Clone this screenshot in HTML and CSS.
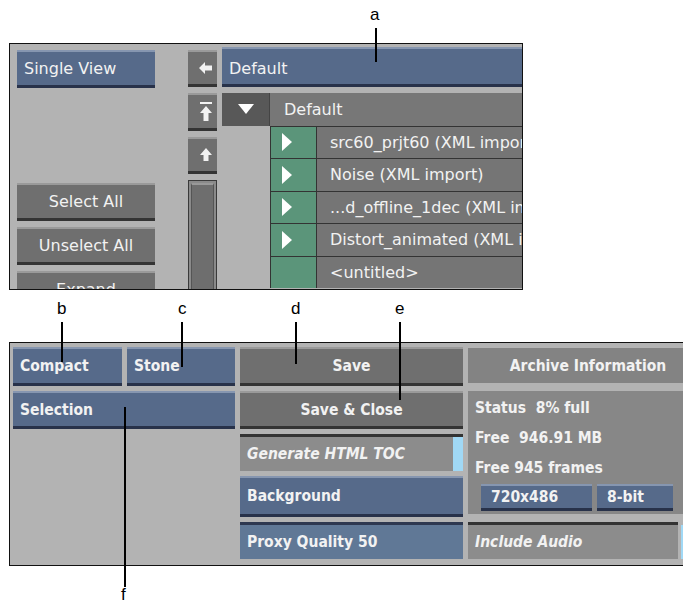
FILE: index.html
```html
<!DOCTYPE html>
<html lang="en">
<head>
  <meta charset="UTF-8">
  <title>Library Menu</title>
  <link rel="stylesheet" href="styles.css">
</head>
<body>

<div class="figure">

  <div class="panel top-panel">
    <div class="left-col">
      <div class="btn blue">Single View</div>
      <div class="btn grey center first-action">Select All</div>
      <div class="btn grey center">Unselect All</div>
      <div class="btn grey center">Expand</div>
    </div>

    <div class="scroll-col">
      <div class="btn grey icon-btn">
        <svg width="14" height="12" viewBox="0 0 14 12"><path d="M0 6 L6 0 L6 3.5 L13 3.5 L13 8.5 L6 8.5 L6 12 Z" fill="#f2f2f2"/></svg>
      </div>
      <div class="btn grey icon-btn tall">
        <svg width="12" height="20" viewBox="0 0 12 20"><rect x="0" y="0" width="12" height="2" fill="#f2f2f2"/><path d="M6 4 L12 11 L8.5 11 L8.5 19 L3.5 19 L3.5 11 L0 11 Z" fill="#f2f2f2"/></svg>
      </div>
      <div class="btn grey icon-btn">
        <svg width="12" height="14" viewBox="0 0 12 14"><path d="M6 0 L12 7 L8.5 7 L8.5 13 L3.5 13 L3.5 7 L0 7 Z" fill="#f2f2f2"/></svg>
      </div>
      <div class="track"><div class="thumb"></div></div>
    </div>

    <div class="tree-col">
      <div class="btn blue path-bar">Default</div>
      <div class="tree">
        <div class="cell head-toggle">
          <svg width="16" height="10" viewBox="0 0 16 10"><path d="M0 0 L16 0 L8 10 Z" fill="#fff"/></svg>
        </div>
        <div class="cell head-name">Default</div>

        <div class="cell blank"></div>
        <div class="cell play"><svg width="10" height="18" viewBox="0 0 10 18"><path d="M0 0 L10 9 L0 18 Z" fill="#fff"/></svg></div>
        <div class="cell name">src60_prjt60 (XML import)</div>

        <div class="cell blank"></div>
        <div class="cell play"><svg width="10" height="18" viewBox="0 0 10 18"><path d="M0 0 L10 9 L0 18 Z" fill="#fff"/></svg></div>
        <div class="cell name">Noise (XML import)</div>

        <div class="cell blank"></div>
        <div class="cell play"><svg width="10" height="18" viewBox="0 0 10 18"><path d="M0 0 L10 9 L0 18 Z" fill="#fff"/></svg></div>
        <div class="cell name">...d_offline_1dec (XML import)</div>

        <div class="cell blank"></div>
        <div class="cell play"><svg width="10" height="18" viewBox="0 0 10 18"><path d="M0 0 L10 9 L0 18 Z" fill="#fff"/></svg></div>
        <div class="cell name">Distort_animated (XML import)</div>

        <div class="cell blank"></div>
        <div class="cell play"></div>
        <div class="cell name">&lt;untitled&gt;</div>
      </div>
    </div>
  </div>

  <div class="panel bottom-panel">
    <div class="pair">
      <div class="btn blue bold">Compact</div>
      <div class="btn blue bold">Stone</div>
    </div>
    <div class="btn grey bold center">Save</div>
    <div class="btn grey bold center archive">Archive Information</div>

    <div class="btn blue bold">Selection</div>
    <div class="btn grey bold center">Save &amp; Close</div>
    <div class="status">
      <div class="status-line">Status&nbsp; 8% full</div>
      <div class="status-line">Free&nbsp; 946.91 MB</div>
      <div class="status-line">Free 945 frames</div>
      <div class="format">
        <div class="btn blue small fmt-size">720x486</div>
        <div class="btn blue small fmt-depth">8-bit</div>
      </div>
    </div>

    <div class="field toc">Generate HTML TOC<span class="led"></span></div>
    <div class="btn blue bold background">Background</div>
    <div class="btn blue-field proxy">Proxy Quality 50</div>
    <div class="field wide">Include Audio<span class="led"></span></div>
  </div>

  <!-- callouts -->
  <div class="callout" style="left: 370px; top: 5px;">a</div>
  <div class="lead" style="left: 375px; top: 28px; height: 34px;"></div>

  <div class="callout" style="left: 57px; top: 299px;">b</div>
  <div class="lead" style="left: 61px; top: 322px; height: 40px;"></div>

  <div class="callout" style="left: 178px; top: 299px;">c</div>
  <div class="lead" style="left: 181px; top: 322px; height: 45px;"></div>

  <div class="callout" style="left: 291px; top: 299px;">d</div>
  <div class="lead" style="left: 295px; top: 322px; height: 42px;"></div>

  <div class="callout" style="left: 395px; top: 299px;">e</div>
  <div class="lead" style="left: 399px; top: 322px; height: 78px;"></div>

  <div class="lead" style="left: 124px; top: 407px; height: 180px;"></div>
  <div class="callout" style="left: 121px; top: 585px;">f</div>

</div>

</body>
</html>
```

FILE: styles.css
```css
html, body {
  margin: 0;
  padding: 0;
  overflow: hidden;
  background-color: #fff;
}

.figure {
  position: relative;
  width: 683px;
  height: 601px;
  padding: 43px 0 0 9px;
  box-sizing: border-box;
  overflow: hidden;
  font-family: "DejaVu Sans", sans-serif;
  font-size: 16px;
  color: #f2f2f2;
}

.panel {
  background-color: #b3b3b3;
  border: 1px solid #111;
  box-sizing: border-box;
  overflow: hidden;
}

/* ---------- top panel ---------- */

.top-panel {
  width: 514px;
  height: 247px;
  display: flex;
  padding: 6px 0 0 7px;
}

.left-col {
  width: 138px;
  display: flex;
  flex-direction: column;
  gap: 6px;
}

.left-col .btn {
  height: 38px;
  flex-shrink: 0;
}

.left-col .first-action {
  margin-top: 89px;
}

.scroll-col {
  width: 29px;
  margin-left: 33px;
  display: flex;
  flex-direction: column;
  gap: 6px;
}

.scroll-col > * {
  flex-shrink: 0;
}

.icon-btn {
  height: 37px;
  justify-content: center;
  padding: 0;
}

.icon-btn.tall {
  height: 38px;
}

.track {
  height: 120px;
  border: 1px solid #3a3a3a;
  background-color: #8a8a8a;
  padding: 2px;
  box-sizing: border-box;
}

.thumb {
  height: 100%;
  background-color: #6e6e6e;
  border-top: 2px solid #999;
  border-left: 1px solid #555;
  border-right: 1px solid #555;
}

.tree-col {
  flex: 1;
  margin-left: 5px;
  display: flex;
  flex-direction: column;
}

.path-bar {
  height: 40px;
  flex-shrink: 0;
  margin-top: -3px;
  padding-left: 6px;
  padding-top: 3px;
}

.tree {
  margin-top: 6px;
  display: grid;
  grid-template-columns: 48px 47px 1fr;
  grid-auto-rows: 32.5px;
}

.cell {
  display: flex;
  align-items: center;
  box-sizing: border-box;
  white-space: nowrap;
  overflow: hidden;
}

.head-toggle {
  background-color: #585858;
  justify-content: center;
  border-right: 1px solid #444;
}

.head-name {
  grid-column: 2 / 4;
  background-color: #777;
  padding-left: 14px;
}

.blank {
  background-color: #b3b3b3;
}

.play {
  background-color: #5b957a;
  border: 1px solid #333;
  border-bottom: none;
  padding-left: 11px;
}

.name {
  background-color: #757575;
  border-top: 1px solid #333;
  padding-left: 13px;
}

/* ---------- buttons ---------- */

.btn {
  display: flex;
  align-items: center;
  box-sizing: border-box;
  padding-left: 7px;
  white-space: nowrap;
  overflow: hidden;
}

.btn.center {
  justify-content: center;
  padding-left: 0;
}

.btn.bold {
  font-family: "DejaVu Sans Condensed", "DejaVu Sans", sans-serif;
  font-weight: bold;
  font-size: 15.5px;
}

.blue {
  background-color: #566a8a;
  border-top: 2px solid #8696b0;
  border-bottom: 3px solid #28324a;
}

.grey {
  background-color: #6f6f6f;
  border-top: 2px solid #9a9a9a;
  border-bottom: 3px solid #343434;
}

/* ---------- bottom panel ---------- */

.bottom-panel {
  margin-top: 52px;
  width: 700px;
  height: 224px;
  display: grid;
  grid-template-columns: 222px 223px 240px;
  grid-template-rows: 39px 38px 37px 41px 37px;
  column-gap: 5px;
  row-gap: 5px;
  padding: 4px 0 0 3px;
  font-family: "DejaVu Sans Condensed", "DejaVu Sans", sans-serif;
}

.pair {
  display: grid;
  grid-template-columns: 109px 108px;
  column-gap: 5px;
}

.archive {
  margin-top: 1px;
  height: 35px;
  background-color: #838383;
  border-top: none;
  border-bottom: none;
}

.status {
  grid-column: 3;
  grid-row: 2 / 5;
  background-color: #878787;
  margin-bottom: 3px;
  padding: 5px 0 0 7px;
  font-weight: bold;
  font-size: 15.5px;
}

.status-line {
  height: 30px;
  line-height: 24px;
}

.format {
  display: flex;
  gap: 5px;
  margin: -2px 0 0 6px;
}

.btn.small {
  height: 27px;
  padding-left: 10px;
}

.fmt-size {
  width: 111px;
}

.fmt-depth {
  width: 76px;
}

.toc {
  grid-column: 2;
  grid-row: 3;
}

.background {
  grid-column: 2;
  grid-row: 4;
}

.proxy {
  grid-column: 2;
  grid-row: 5;
}

.field {
  position: relative;
  background-color: #8c8c8c;
  border-top: 3px solid #333;
  padding-left: 7px;
  display: flex;
  align-items: center;
  font-style: italic;
  font-weight: bold;
  font-size: 15.5px;
}

.field.wide {
  grid-column: 3;
  grid-row: 5;
  margin-right: 30px;
  overflow: visible;
}

.led {
  position: absolute;
  right: 0;
  top: 0;
  bottom: 0;
  width: 10px;
  background-color: #a0d8f5;
}

.field.wide .led {
  right: -8px;
  width: 5px;
}

.blue-field {
  background-color: #607896;
  border-top: 3px solid #2e3850;
  font-weight: bold;
  font-size: 15.5px;
}

/* ---------- callouts ---------- */

.callout {
  position: absolute;
  font-family: "Liberation Sans", Arial, sans-serif;
  font-size: 17px;
  color: #000;
  line-height: 20px;
}

.lead {
  position: absolute;
  width: 2px;
  background-color: #000;
}
```
